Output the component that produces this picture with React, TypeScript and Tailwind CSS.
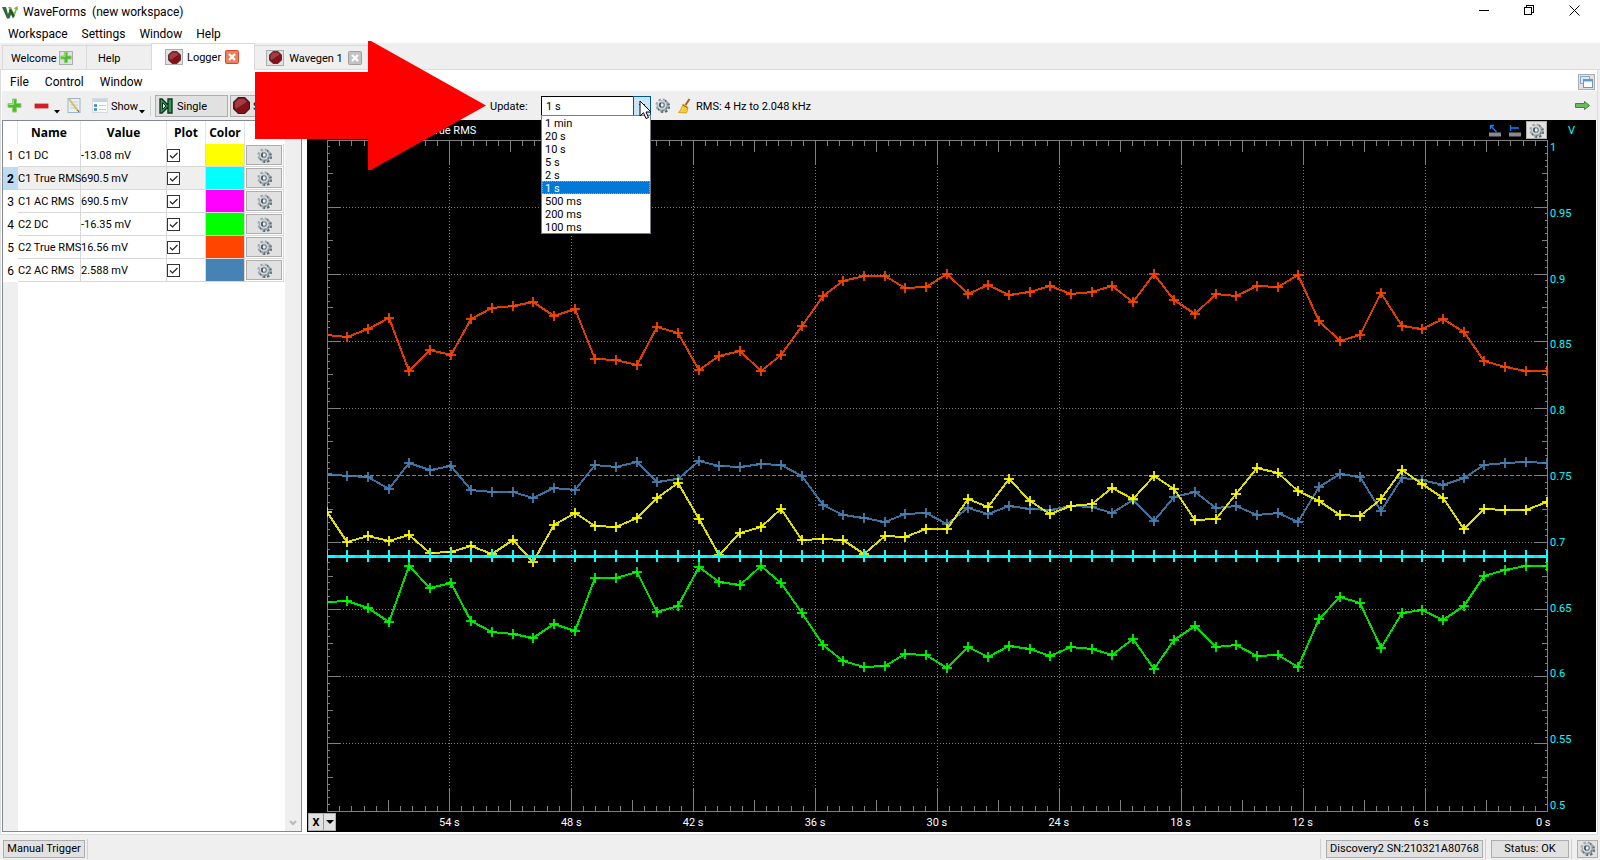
import { ReactNode } from "react";

const channels = [
  { name: "C1 DC", value: "-13.08 mV", color: "bg-[#ffff00]" },
  { name: "C1 True RMS", value: "690.5 mV", color: "bg-[#00ffff]" },
  { name: "C1 AC RMS", value: "690.5 mV", color: "bg-[#ff00ff]" },
  { name: "C2 DC", value: "-16.35 mV", color: "bg-[#00ff00]" },
  { name: "C2 True RMS", value: "16.56 mV", color: "bg-[#ff4500]" },
  { name: "C2 AC RMS", value: "2.588 mV", color: "bg-[#4682b4]" },
];

const rates = ["1 min", "20 s", "10 s", "5 s", "2 s", "1 s", "500 ms", "200 ms", "100 ms"];
const volts = ["1", "0.95", "0.9", "0.85", "0.8", "0.75", "0.7", "0.65", "0.6", "0.55", "0.5"];
const times = ["54 s", "48 s", "42 s", "36 s", "30 s", "24 s", "18 s", "12 s", "6 s", "0 s"];

// one sample per second, in thirds of a plot unit below the offset
const series = [
  {
    color: "#4682b4",
    offset: 100,
    samples: [
      703, 708, 711, 747, 670, 690, 678, 750, 756, 756, 774, 744, 750, 675, 681, 666, 726, 717, 663, 678,
      681, 672, 675, 708, 795, 825, 834, 846, 822, 819, 852, 804, 822, 798, 807, 810, 799, 801, 819, 780,
      843, 771, 756, 804, 798, 825, 819, 846, 741, 702, 711, 813, 714, 720, 735, 714, 675, 669, 666, 671,
    ],
  },
  {
    color: "#ff4500",
    offset: 100,
    samples: [
      287, 291, 269, 234, 393, 330, 345, 237, 205, 198, 186, 228, 207, 357, 360, 375, 261, 279, 390, 348,
      333, 393, 345, 258, 168, 123, 108, 108, 144, 141, 102, 162, 135, 165, 156, 138, 162, 156, 138, 186,
      102, 180, 222, 162, 168, 138, 141, 105, 243, 303, 285, 159, 258, 267, 237, 276, 363, 381, 393, 393,
    ],
  },
  {
    color: "#00ff00",
    offset: 410,
    samples: [
      158, 153, 174, 216, 50, 114, 99, 213, 246, 252, 264, 222, 243, 84, 84, 66, 186, 168, 51, 96,
      107, 48, 99, 189, 285, 333, 351, 348, 312, 315, 354, 291, 321, 288, 297, 318, 291, 297, 315, 267,
      357, 270, 228, 291, 285, 318, 315, 351, 207, 141, 159, 294, 189, 180, 210, 168, 78, 60, 48, 48,
    ],
  },
  {
    color: "#ffff00",
    offset: 100,
    samples: [
      817, 906, 888, 903, 885, 940, 938, 918, 943, 900, 966, 855, 819, 858, 861, 834, 774, 729, 837, 947,
      879, 861, 807, 900, 897, 900, 942, 888, 891, 867, 867, 777, 801, 717, 783, 822, 798, 792, 744, 779,
      709, 747, 840, 837, 762, 684, 699, 753, 783, 825, 828, 777, 690, 732, 774, 867, 807, 810, 810, 788,
    ],
  },
];

const px = (i: number) => Math.floor((i * 1220) / 59);

function Gear() {
  return (
    <svg width="15" height="15" viewBox="0 0 16 16">
      <circle cx="9" cy="9" r="5.800" fill="none" stroke="#5f6d75" strokeWidth="2.600" strokeDasharray="2.600 1.960" />
      <circle cx="8.800" cy="8.800" r="5.200" fill="#75838b" />
      <circle cx="7.500" cy="7.500" r="5.800" fill="none" stroke="#9ba7ad" strokeWidth="2.600" strokeDasharray="2.600 1.960" />
      <circle cx="7.500" cy="7.500" r="5" fill="#cfd6da" />
      <circle cx="7.500" cy="7.500" r="2.400" fill="#eceeef" stroke="#6c7981" strokeWidth="1.200" />
      <path d="M6.200 5.500a2.400 2.400 0 0 0 0 4" stroke="#36444d" strokeWidth="1.400" fill="none" />
    </svg>
  );
}

function Plus() {
  return (
    <svg width="15" height="15" viewBox="0 0 15 15">
      <path d="M5.500 1h4v4.500h4.500v4H9.500v4.500h-4V9.500H1v-4h4.500z" fill="#4fb92f" stroke="#8fcf78" />
      <path d="M6.500 2v4.500H2" stroke="#a5e38e" fill="none" />
    </svg>
  );
}

function Stop({ size }: { size: number }) {
  return (
    <svg width={size} height={size} viewBox="0 0 16 16">
      <path d="M5 .5h6L15.500 5v6L11 15.500H5L.5 11V5z" fill="#86101a" stroke="#2b2223" />
      <path d="M5.300 1.800h5.300L13 4.400 3 11 1.800 9V5.200z" fill="#b0555a" opacity=".65" />
    </svg>
  );
}

function TabStop() {
  return (
    <button aria-label="Stop" className="flex h-4 w-[18px] items-center justify-center border border-[#adadad] bg-[#e1e1e1]">
      <Stop size={13} />
    </button>
  );
}

function Close({ active }: { active?: boolean }) {
  return (
    <button aria-label="Close tab" className="block">
      <svg width="14" height="14" viewBox="0 0 14 14">
        <rect x=".5" y=".5" width="13" height="13" rx="1" fill={active ? "#e8815c" : "#c3c3c3"} stroke={active ? "#d0492f" : "#a0a0a0"} />
        <path d="M4 4l6 6M10 4l-6 6" stroke="#fff" strokeWidth="2.200" />
      </svg>
    </button>
  );
}

function Caret() {
  return (
    <svg width="6" height="4" viewBox="0 0 6 4" className="mt-3">
      <path d="M0 0h6L3 3.500z" fill="#000" />
    </svg>
  );
}

function Sep() {
  return <div className="h-5 w-px shrink-0 bg-[#d0d0d0]" />;
}

function StatusButton({ children, className }: { children: ReactNode; className: string }) {
  return (
    <button className={`flex h-[18px] shrink-0 items-center justify-center whitespace-nowrap border border-[#adadad] bg-[#e1e1e1] ${className}`}>
      {children}
    </button>
  );
}

function Ticks() {
  const d: string[] = [];
  for (let i = 1; i < 100; i++) {
    const x = Math.round(i * 12.2) + 0.5;
    const y = Math.floor(i * 6.71) + 0.5;
    const v = i % 10 === 0 ? 24 : i % 5 === 0 ? 12 : 6;
    const h = i % 10 === 0 ? 13 : i % 5 === 0 ? 6 : 3;
    d.push(`M${x} 0v${v}M${x} 672v-${v}M0 ${y}h${h}M1221 ${y}h-${h}`);
  }
  return <path d={d.join("")} stroke="#808080" fill="none" />;
}

function Plot() {
  const rows = [1, 2, 3, 4, 5, 6, 7, 8, 9];
  return (
    <svg viewBox="0 0 1221 672" preserveAspectRatio="none" shapeRendering="crispEdges" className="block h-full w-full">
      {rows.map((n) => (
        <g key={n} stroke="#808080">
          <path d={`M${n * 122 + 0.5} 24v624`} strokeDasharray="1 2" />
          <path d={`M13 ${Math.floor(n * 67.1) + 0.5}h1195`} strokeDasharray={n === 5 ? "4 2" : "1 2"} />
        </g>
      ))}
      <Ticks />
      <rect x=".5" y=".5" width="1220" height="671" fill="none" stroke="#808080" />
      {series.map((s) => {
        const pts = s.samples.map((v, i) => [px(i), Math.floor(s.offset + v / 3)]);
        return (
          <g key={s.color} stroke={s.color} fill="none" strokeWidth="2">
            <polyline points={pts.map((p) => p.join(",")).join(" ")} opacity=".87" />
            <path d={pts.map(([x, y]) => `M${x - 5} ${y}h10M${x} ${y - 5}v10`).join("")} opacity=".87" />
          </g>
        );
      })}
      <g stroke="#00ffff" fill="none">
        <path d="M0 416.500H1221" strokeWidth="3" />
        <path d={Array.from({ length: 60 }, (_, i) => `M${px(i)} 410v12`).join("")} strokeWidth="2" />
        <path d={Array.from({ length: 60 }, (_, i) => `M${px(i) + 8} 416.500h5`).join("")} stroke="#20d8f0" strokeWidth="3" />
      </g>
    </svg>
  );
}

function ChannelTable() {
  const head = "border-r border-[#e5e5e5] p-0 text-center font-bold";
  const cell = "border-b border-r border-[#d8d8d8] p-0";
  return (
    <div className="flex w-[300px] shrink-0 border border-[#828790] bg-white">
      <div className="flex min-w-0 flex-1 flex-col">
        <table className="w-[281px] table-fixed border-separate border-spacing-0">
          <colgroup>
            <col className="w-[15px]" />
            <col className="w-[63px]" />
            <col className="w-[86px]" />
            <col className="w-[39px]" />
            <col className="w-[39px]" />
            <col className="w-[39px]" />
          </colgroup>
          <thead>
            <tr className="h-[23px] font-['Open_Sans',sans-serif] text-[12px]">
              <th className={head}></th>
              <th className={head}>Name</th>
              <th className={head}>Value</th>
              <th className={head}>Plot</th>
              <th className={head}>Color</th>
              <th className="p-0"></th>
            </tr>
          </thead>
          <tbody>
            {channels.map((c, i) => (
              <tr key={c.name} className={i === 1 ? "h-[23px] bg-[#efefef]" : "h-[23px]"}>
                <td className={i === 1 ? "bg-[#bbdcf4] p-0 text-center text-[12px] font-bold" : "p-0 text-center text-[12px]"}>{i + 1}</td>
                <td className={`${cell} whitespace-nowrap`}><div className="pt-[2px]">{c.name}</div></td>
                <td className={`${cell} whitespace-nowrap`}><div className="pt-[2px]">{c.value}</div></td>
                <td className={cell}>
                  <label className="relative block h-[13px] w-[13px]">
                    <input type="checkbox" defaultChecked aria-label={`Plot ${c.name}`} className="peer block h-[13px] w-[13px] appearance-none border border-[#333] bg-white" />
                    <svg viewBox="0 0 13 13" className="pointer-events-none absolute inset-0 hidden peer-checked:block">
                      <path d="M3 6.500l2.500 2.500L10.500 4" fill="none" stroke="#222" strokeWidth="1.200" />
                    </svg>
                  </label>
                </td>
                <td className={`${cell} ${c.color}`}></td>
                <td className={`${cell} bg-white`}>
                  <button aria-label={`${c.name} settings`} className="mx-auto flex h-5 w-9 items-center justify-center border border-[#adadad] bg-[#e1e1e1]">
                    <Gear />
                  </button>
                </td>
              </tr>
            ))}
          </tbody>
        </table>
        <div className="w-[15px] flex-1 bg-[#efefef]" />
      </div>
      <div className="flex w-4 items-end justify-center bg-[#efefef] pb-1">
        <svg width="8" height="8" viewBox="0 0 8 8">
          <path d="M1 2l3 3 3-3" fill="none" stroke="#b8b8b8" strokeWidth="2" />
        </svg>
      </div>
    </div>
  );
}

function UpdateSelect() {
  return (
    <div className="relative ml-3 h-5 w-[110px]">
      <select id="update" defaultValue="1 s" className="block h-5 w-full appearance-none border border-black bg-white pl-1 pt-[2px] text-[11px] leading-4">
        {rates.map((r) => (
          <option key={r}>{r}</option>
        ))}
      </select>
      <span className="pointer-events-none absolute right-0 top-0 flex h-5 w-[18px] items-center justify-center border border-[#005499] bg-[#cce4f7]">
        <svg width="8" height="5" viewBox="0 0 8 5">
          <path d="M1 1l3 3 3-3" fill="none" stroke="#444" />
        </svg>
      </span>
      <ul role="listbox" className="absolute left-0 top-[19px] z-10 w-[110px] border border-[#7a7a8a] bg-white">
        {rates.map((r) => (
          <li
            key={r}
            role="option"
            aria-selected={r === "1 s"}
            className={
              r === "1 s"
                ? "h-[13px] bg-[#0078d7] pl-[3px] leading-[15px] text-white outline-1 -outline-offset-1 outline-dotted outline-[#e0904a]"
                : "h-[13px] pl-[3px] leading-[15px]"
            }
          >
            {r}
          </li>
        ))}
      </ul>
      <svg width="13" height="20" viewBox="0 0 13 20" className="absolute -right-px top-1 z-20">
        <path d="M1 1v15l3.500-3.300L7 18.500l2.500-1-2.500-5.500h5z" fill="#fff" stroke="#000" />
      </svg>
    </div>
  );
}

function Toolbar() {
  return (
    <div className="ml-px flex h-[29px] items-center bg-[#efefef] pl-[5px]">
      <button aria-label="Add"><Plus /></button>
      <button aria-label="Remove" className="ml-3 flex w-[26px] items-center gap-[5px]">
        <svg width="15" height="6" viewBox="0 0 15 6">
          <rect x=".5" y=".5" width="14" height="5" rx="1" fill="#cf2027" stroke="#e59a9c" />
        </svg>
        <Caret />
      </button>
      <button aria-label="Edit" className="ml-[7px]">
        <svg width="14" height="17" viewBox="0 0 14 17">
          <rect x="1" y="1.500" width="12" height="14" fill="#e9f0f6" stroke="#9fb3c4" />
          <path d="M3 5h8M3 8h8M3 11h8" stroke="#bccddb" />
          <path d="M2 2l9 12" stroke="#e2bd4c" strokeWidth="2" />
          <path d="M10.500 13l1.500 2" stroke="#555" />
        </svg>
      </button>
      <button className="ml-[11px] flex items-center">
        <svg width="16" height="15" viewBox="0 0 16 15">
          <rect x=".5" y=".5" width="15" height="14" fill="#fbfcfd" stroke="#d5dce2" />
          <path d="M1 2.500h14" stroke="#c5d6e6" strokeWidth="3" />
          <path d="M2 7.500h3M2 11.500h3" stroke="#3d84d6" strokeWidth="2.500" />
          <path d="M7 7.500h7M7 11.500h7" stroke="#c5cbd1" />
        </svg>
        <span className="ml-[3px] w-7 pt-[2px] text-left">Show</span>
        <Caret />
      </button>
      <div className="ml-[5px]"><Sep /></div>
      <button className="ml-1 flex h-[22px] w-[73px] items-center gap-1 border border-[#adadad] bg-[#e1e1e1] pl-[3px]">
        <svg width="14" height="16" viewBox="0 0 14 16">
          <path d="M1 1h2l6 6V1h4v14H9V9l-6 6H1z" fill="#2f9a58" stroke="#12341f" strokeWidth="1.400" />
          <path d="M3.500 4.500v7L7 8z" fill="#e1e1e1" stroke="#12341f" />
        </svg>
        <span className="pt-[2px]">Single</span>
      </button>
      <button className="ml-[2px] flex h-[22px] w-16 items-center gap-[3px] border border-[#adadad] bg-[#e1e1e1] pl-[2px]">
        <Stop size={17} />
        <span className="pt-[2px]">Stop</span>
      </button>
      <label htmlFor="update" className="ml-[196px] w-[39px] whitespace-nowrap pt-[2px]">Update:</label>
      <UpdateSelect />
      <button aria-label="Update settings" className="ml-1"><Gear /></button>
      <button aria-label="Clear" className="ml-[7px]">
        <svg width="15" height="16" viewBox="0 0 15 16">
          <path d="M12.500 1L8.500 7" stroke="#a0622b" strokeWidth="2" />
          <path d="M6 6l5 3.500-1.500 5.500-8-.5C4 12 5 9 6 6z" fill="#f3cf3d" stroke="#d3a520" />
          <path d="M6 7l4.500 3" stroke="#c0392b" />
        </svg>
      </button>
      <span className="ml-1 whitespace-nowrap pt-[2px]">RMS: 4 Hz to 2.048 kHz</span>
      <button aria-label="Next" className="ml-auto mr-[7px]">
        <svg width="15" height="9" viewBox="0 0 15 9">
          <path d="M.5 2.500h9v-2l5 4-5 4v-2h-9z" fill="#6fb765" stroke="#3f8a38" />
        </svg>
      </button>
    </div>
  );
}

function Graph() {
  return (
    <div className="flex min-w-0 flex-1 flex-col bg-black text-white">
      <div className="flex h-5 items-center">
        <span className="ml-[106px] pt-[2px]">C1 True RMS</span>
        <div className="ml-auto flex items-center">
          <button aria-label="Cursor">
            <svg width="12" height="13" viewBox="0 0 12 13">
              <path d="M1.500 5V1.500H5M2 2l5.500 6" stroke="#0a84ff" strokeWidth="1.300" fill="none" />
              <path d="M0 10.500h12" stroke="#8a8a8a" strokeWidth="4" />
            </svg>
          </button>
          <button aria-label="Measure" className="ml-2">
            <svg width="12" height="13" viewBox="0 0 12 13">
              <path d="M1.500 1v6M1.500 4H10" stroke="#0a84ff" strokeWidth="1.300" fill="none" />
              <path d="M0 10.500h12" stroke="#8a8a8a" strokeWidth="4" />
            </svg>
          </button>
          <button aria-label="Plot settings" className="ml-[5px] flex h-[18px] w-[21px] items-center justify-center border border-[#adadad] bg-[#e1e1e1]">
            <Gear />
          </button>
          <span className="w-[49px] pl-[21px] pt-[2px] text-[#00ffff]">V</span>
        </div>
      </div>
      <div className="flex min-h-0 flex-1 pl-5">
        <div className="relative min-w-0 flex-1">
          <div className="absolute inset-0"><Plot /></div>
        </div>
        <div className="flex w-12 flex-col justify-between pl-[2px] pt-px leading-[13px] text-[#00ffff]">
          {volts.map((v) => (
            <span key={v}>{v}</span>
          ))}
        </div>
      </div>
      <div className="flex h-5 items-center pr-3">
        <button className="ml-px flex h-[18px] w-7 items-center border border-[#adadad] bg-[#e1e1e1] text-black">
          <span className="w-[14px] pt-px text-center font-bold">X</span>
          <span className="flex h-4 flex-1 items-center justify-center border-l border-[#999]">
            <svg width="8" height="4" viewBox="0 0 8 4">
              <path d="M0 0h8L4 4z" />
            </svg>
          </span>
        </button>
        <div className="ml-[103px] flex flex-1 justify-between pt-[2px]">
          {times.map((t) => (
            <span key={t} className="w-12">{t}</span>
          ))}
        </div>
      </div>
    </div>
  );
}

function App() {
  return (
    <div className="relative flex min-h-screen flex-col overflow-hidden bg-[#efefef] font-[Roboto,sans-serif] text-[11px] leading-4 text-black">
      <header className="h-[43px] bg-white text-[12px]">
        <div className="flex h-6 items-center pl-[2px]">
          <svg width="16" height="13" viewBox="0 0 16 13">
            <path d="M0 1h4l2 7 2-5 2 3-2.500 6.500H5z" fill="#2d6b3c" />
            <path d="M6 1h3l3 6 1.500-4-2-.500L15.500 0 16 4l-1-.500L12 12z" fill="#78b843" />
            <path d="M7 4l4 8.500 1.500-3L9 3z" fill="#274b33" />
          </svg>
          <h1 className="ml-[5px] whitespace-pre">WaveForms  (new workspace)</h1>
          <div className="ml-auto flex items-center gap-[35px] pb-1 pr-5">
            <button aria-label="Minimize"><svg width="10" height="10"><path d="M0 5.500h10" stroke="#000" /></svg></button>
            <button aria-label="Restore">
              <svg width="10" height="10" shapeRendering="crispEdges">
                <path d="M.5 2.500h7v7h-7zM2.500 2.500v-2h7v7h-2" fill="none" stroke="#000" />
              </svg>
            </button>
            <button aria-label="Close"><svg width="11" height="11"><path d="M.5 .5l10 10M10.500 .5l-10 10" stroke="#000" /></svg></button>
          </div>
        </div>
        <nav className="flex h-[19px] items-center gap-[14px] pl-2">
          <button>Workspace</button>
          <button>Settings</button>
          <button>Window</button>
          <button>Help</button>
        </nav>
      </header>

      <div className="flex h-[27px] items-end border-b border-[#dcdcdc] pl-[2px]">
        <div className="flex h-6 w-[84px] items-center gap-[3px] border-l border-t border-[#d9d9d9] pl-2">
          <button className="w-[45px] pt-[2px] text-left">Welcome</button>
          <button aria-label="New instrument" className="flex h-[14px] w-[14px] items-center justify-center border border-[#adadad] bg-[#e1e1e1]">
            <Plus />
          </button>
        </div>
        <div className="flex h-6 w-[65px] items-center border-l border-t border-[#d9d9d9] pl-[11px]">
          <button className="pt-[2px]">Help</button>
        </div>
        <div className="-mb-px flex h-[27px] w-[104px] items-center gap-[4px] border-x border-t border-[#d9d9d9] bg-white pl-[13px]">
          <TabStop />
          <button className="w-[34px] pt-[2px]">Logger</button>
          <Close active />
        </div>
        <div className="flex h-6 w-[118px] items-center gap-[5px] border-r border-t border-[#d9d9d9] pl-[11px]">
          <TabStop />
          <button className="w-[54px] whitespace-nowrap pt-[2px]">Wavegen 1</button>
          <Close />
        </div>
      </div>

      <main className="mr-[2px] flex flex-1 flex-col border-x border-b border-[#dcdcdc] bg-white pb-[2px]">
        <nav className="flex h-[21px] items-center gap-4 pl-[9px] pt-[2px] text-[12px]">
          <button>File</button>
          <button>Control</button>
          <button>Window</button>
          <button aria-label="Undock" className="ml-auto mr-[2px] flex h-4 w-[17px] items-center justify-center border border-[#adadad] bg-[#e1e1e1]">
            <svg width="13" height="12" viewBox="0 0 13 12">
              <rect x=".5" y=".5" width="9" height="7" fill="#dce8f5" stroke="#85a9d4" />
              <rect x="3.500" y="3.500" width="9" height="8" fill="#fff" stroke="#6a97cc" />
              <path d="M3 4.500h10" stroke="#6a97cc" strokeWidth="2" />
            </svg>
          </button>
        </nav>
        <Toolbar />
        <div className="flex flex-1 gap-[5px] pl-px pr-px">
          <ChannelTable />
          <Graph />
        </div>
      </main>

      <footer className="flex h-[25px] items-center gap-[2px] pr-[2px] pt-[2px]">
        <StatusButton className="ml-[3px] w-[82px]">Manual Trigger</StatusButton>
        <Sep />
        <div className="flex-1" />
        <Sep />
        <StatusButton className="ml-[3px] w-[157px]">Discovery2 SN:210321A80768</StatusButton>
        <Sep />
        <StatusButton className="ml-[3px] w-[78px]">Status: OK</StatusButton>
        <Sep />
        <StatusButton className="ml-[3px] w-[21px]"><Gear /></StatusButton>
      </footer>

      {/* callout pointing at the update rate */}
      <svg width="231" height="130" viewBox="0 0 231 130" className="pointer-events-none absolute left-[255px] top-[41px] z-30">
        <path d="M0 31h113V0h3l115 64.500L116 129h-3V98H0z" fill="#f00" />
      </svg>
    </div>
  );
}

export default App;
